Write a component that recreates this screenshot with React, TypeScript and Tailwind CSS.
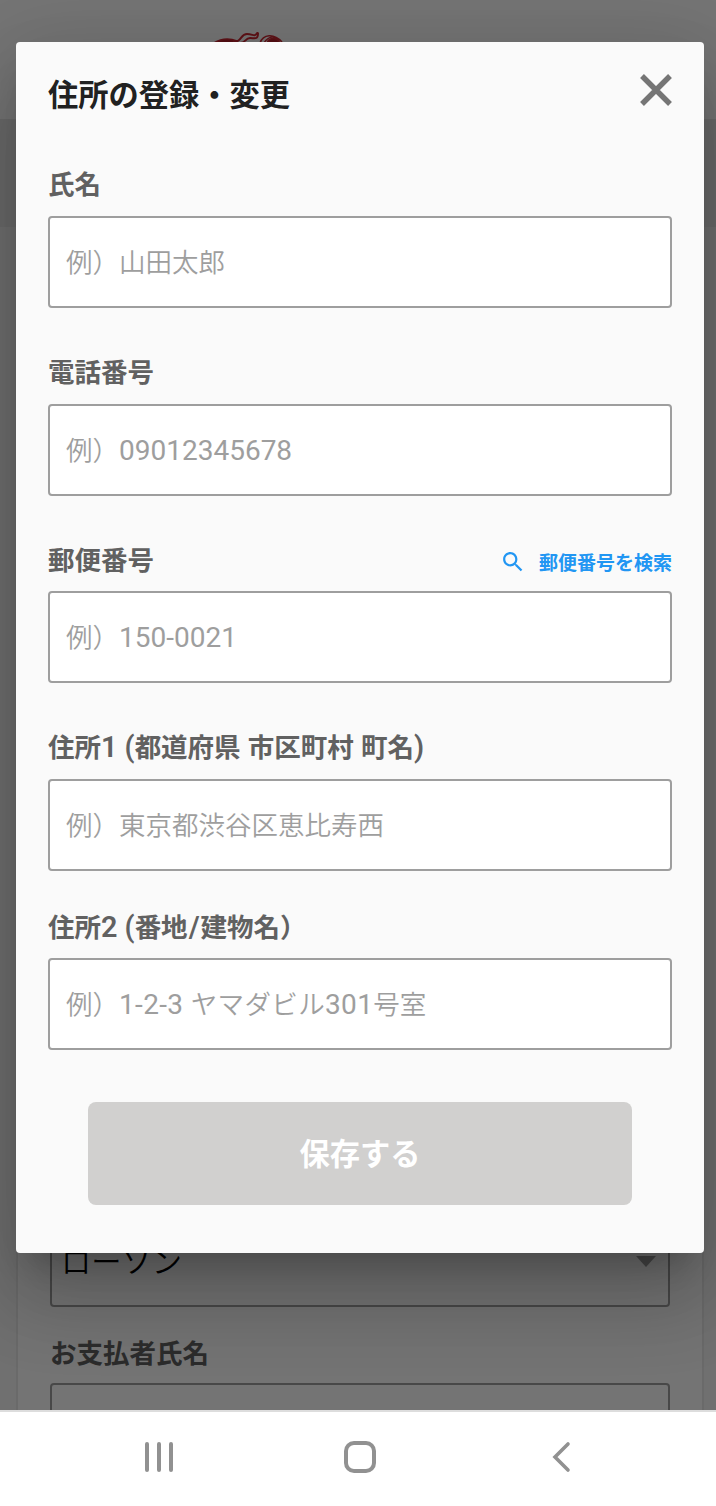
import type { ReactNode } from 'react';

interface FieldProps {
  label: ReactNode;
  placeholder: ReactNode;
  action?: ReactNode;
  className: string;
}

// 英数字は和文より少し大きく組む
function Latin({ children }: { children: ReactNode }) {
  return <span className="text-[28px] font-normal whitespace-pre">{children}</span>;
}

function LatinBold({ children }: { children: ReactNode }) {
  return <span className="text-[28.8px] font-semibold whitespace-pre">{children}</span>;
}

function Field({ label, placeholder, action, className }: FieldProps) {
  return (
    <div className={className}>
      <div className="flex h-8 items-center justify-between">
        <span className="pt-px text-[26.5px] leading-8 font-bold whitespace-nowrap text-[#616161]">{label}</span>
        {action}
      </div>
      <div className="flex h-[92px] items-center rounded-[4px] border-2 border-[#9e9e9e] bg-white px-4 pt-0.5 text-[26.5px] leading-8 font-[350] whitespace-nowrap text-[#9e9e9e]">
        <span>{placeholder}</span>
      </div>
    </div>
  );
}

function SearchLink() {
  return (
    <button className="flex items-center gap-[15px] pt-1 text-[19px] leading-7 font-bold text-[#2196f3]">
      <svg width="22" height="22" viewBox="2 2 20 20" fill="currentColor">
        <path d="M15.5 14h-.79l-.28-.27C15.41 12.59 16 11.11 16 9.5 16 5.91 13.09 3 9.5 3S3 5.91 3 9.5 5.91 16 9.5 16c1.61 0 3.09-.59 4.23-1.57l.27.28v.79l5 4.99L20.49 19l-4.99-5zm-6 0C7.01 14 5 11.99 5 9.5S7.01 5 9.5 5 14 7.01 14 9.5 11.99 14 9.5 14z" />
      </svg>
      <span className="pt-[3px]">郵便番号を検索</span>
    </button>
  );
}

function BackgroundPage() {
  return (
    <div className="flex h-[1410px] flex-col overflow-hidden bg-[#f5f5f5]">
      <header className="flex h-[119px] shrink-0 justify-center bg-white pt-8">
        <svg className="mr-[218px] h-6 w-[72px]" viewBox="0 0 72 24" fill="none" stroke="#d02a35" strokeWidth="1.5">
          <path d="M1 11Q12 4 24 9L18 14H2Z" fill="#b8202c" />
          <path d="M20 9C29 11 27 2 34 2S41 6 45 0" strokeWidth="2" />
          <path d="M27 11C33 11 32 6 37 6S45 8 45 1" strokeWidth="2" />
          <path d="M47 11C50 2 61 1 69 10M51 11C56 3 62 4 66 9" />
          <path d="M54 11C56 5 64 5 67 11Z" fill="#b8202c" />
        </svg>
      </header>
      <div className="h-[108px] shrink-0 bg-[#eaeaea]" />
      <main className="mr-3 ml-4 flex-1 border-x-2 border-[#e6e6e6] bg-[#fcfcfc] px-8">
        <div className="mt-[988px] flex h-[92px] items-center justify-between rounded-[4px] border-2 border-[#9e9e9e] pr-3 pl-[9px] text-[30.25px] leading-8 font-[350] text-black">
          <span className="pt-1">ローソン</span>
          <svg width="20" height="11" viewBox="0 0 20 11" fill="#9e9e9e">
            <path d="M0 0h20L10 11z" />
          </svg>
        </div>
        <p className="mt-[31px] text-[26.5px] leading-8 font-bold text-[#616161]">お支払者氏名</p>
        <div className="mt-[13px] h-[92px] rounded-[4px] border-2 border-[#9e9e9e]" />
      </main>
    </div>
  );
}

function AddressDialog() {
  return (
    <div className="h-[1211px] w-[688px] rounded-[4px] bg-[#fafafa] px-8 pt-8 shadow-[0_22px_30px_-14px_rgba(0,0,0,0.2),0_48px_76px_6px_rgba(0,0,0,0.14),0_18px_92px_16px_rgba(0,0,0,0.12)]">
      <div className="flex h-10 items-start justify-between">
        <h2 className="pt-0.5 text-[30.25px] leading-10 font-bold text-[#212121]">住所の登録・変更</h2>
        <svg width="32" height="32" viewBox="0 0 32 32" stroke="#757575" strokeWidth="5.4">
          <path d="M2 2 30 30M30 2 2 30" />
        </svg>
      </div>
      <Field
        className="mt-[54px] flex flex-col gap-4"
        label="氏名"
        placeholder="例）山田太郎"
      />
      <Field
        className="mt-12 flex flex-col gap-4"
        label="電話番号"
        placeholder={<>例）<Latin>09012345678</Latin></>}
      />
      <Field
        className="mt-12 flex flex-col gap-[15px]"
        label="郵便番号"
        placeholder={<>例）<Latin>150-0021</Latin></>}
        action={<SearchLink />}
      />
      <Field
        className="mt-12 flex flex-col gap-4"
        label={<>住所<LatinBold>1 (</LatinBold>都道府県<LatinBold> </LatinBold>市区町村<LatinBold> </LatinBold>町名<LatinBold>)</LatinBold></>}
        placeholder="例）東京都渋谷区恵比寿西"
      />
      <Field
        className="mt-10 flex flex-col gap-[15px]"
        label={<>住所<LatinBold>2 (</LatinBold>番地<span className="px-px"><LatinBold>/</LatinBold></span>建物名）</>}
        placeholder={<>例）<span className="tracking-[0.35px]"><Latin>1-2-3 </Latin>ヤマダビル<Latin>301</Latin></span>号室</>}
      />
      <button className="mx-10 mt-[52px] flex h-[103px] w-[544px] items-center justify-center rounded-[8px] bg-[#d1d0cf] pt-[3px] text-[30.25px] font-bold text-white">
        保存する
      </button>
    </div>
  );
}

function NavigationBar() {
  return (
    <nav className="flex h-24 justify-between border-t-2 border-[#dddddd] bg-white pt-7 pr-[138px] pl-[142px]">
      <svg width="34" height="34" viewBox="0 0 34 34" stroke="#919191" strokeWidth="4" strokeLinecap="round">
        <path d="M5 4v26M17 4v26M29 4v26" />
      </svg>
      <svg width="34" height="34" viewBox="0 0 34 34" fill="none" stroke="#919191" strokeWidth="4">
        <rect x="3" y="3" width="28" height="28" rx="8" />
      </svg>
      <svg width="34" height="34" viewBox="0 0 34 34" fill="none" stroke="#919191" strokeWidth="3.6" strokeLinecap="round">
        <path d="M24 4 11 17 24 30" />
      </svg>
    </nav>
  );
}

export default function App() {
  return (
    <div className="relative h-[1506px] w-[716px] overflow-hidden bg-white font-[Roboto,'Noto_Sans_CJK_JP',sans-serif]">
      <BackgroundPage />
      <div className="absolute inset-x-0 top-0 h-[1410px] overflow-hidden bg-black/54 pt-[42px] pl-4">
        <AddressDialog />
      </div>
      <NavigationBar />
    </div>
  );
}
